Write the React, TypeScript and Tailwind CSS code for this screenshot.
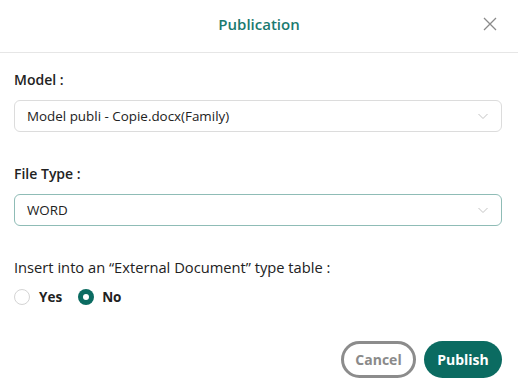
import { useState } from "react";

export default function App() {
    const [insert, setInsert] = useState("no");

    return (
        <div className="w-[518px] h-[384px] bg-white font-['Open_Sans','Noto_Sans',sans-serif] text-[#222]">
            {/* Header */}
            <div className="relative h-[53px] flex items-center justify-center border-b border-[#e6e6e6]">
                <h2 className="text-[15px] font-semibold text-[#1a7a6f] pb-[3px]">Publication</h2>
                <button className="absolute right-[20px] top-[16px] w-[16px] h-[16px] text-[#8a8a8a]">
                    <svg viewBox="0 0 16 16" width="16" height="16" fill="none" stroke="currentColor" strokeWidth="1.3">
                        <path d="M2 2 L14 14 M14 2 L2 14" />
                    </svg>
                </button>
            </div>

            {/* Body */}
            <div className="px-[14px] pt-[17px]">
                <label className="block text-[14px] leading-[20px] font-semibold">Model :</label>
                <div className="mt-[10px] h-[32px] w-[488px] flex items-center justify-between px-[12px] border border-[#dcdcdc] rounded-[6px]">
                    <span className="text-[13.4px]">Model publi - Copie.docx(Family)</span>
                    <Chevron />
                </div>

                <label className="block mt-[32px] text-[14px] leading-[20px] font-semibold">File Type :</label>
                <div className="mt-[10px] h-[32px] w-[488px] flex items-center justify-between px-[12px] border border-[#8fbcb6] rounded-[6px]">
                    <span className="text-[13.4px]">WORD</span>
                    <Chevron />
                </div>

                <p className="mt-[31px] text-[14.7px] leading-[20px] font-medium">
                    Insert into an “External Document” type table :
                </p>
                <div className="mt-[10px] h-[20px] flex items-center gap-[16px]">
                    <label className="flex items-center gap-[9px] cursor-pointer" onClick={() => setInsert("yes")}>
                        <Radio checked={insert === "yes"} />
                        <span className="text-[13.5px] font-bold">Yes</span>
                    </label>
                    <label className="flex items-center gap-[8px] cursor-pointer" onClick={() => setInsert("no")}>
                        <Radio checked={insert === "no"} />
                        <span className="text-[13.5px] font-bold">No</span>
                    </label>
                </div>

                {/* Footer buttons */}
                <div className="mt-[34px] flex justify-end gap-[8px] pr-[2px]">
                    <button className="w-[75px] h-[37px] rounded-full border-[3px] border-[#8c8c8c] text-[14px] font-bold text-[#8a8a8a]">
                        Cancel
                    </button>
                    <button className="w-[78px] h-[37px] rounded-full bg-[#0b6b61] text-[14px] font-bold text-white">
                        Publish
                    </button>
                </div>
            </div>
        </div>
    );
}

function Chevron() {
    return (
        <svg viewBox="0 0 12 12" width="12" height="12" fill="none" stroke="#c4c4c4" strokeWidth="1">
            <path d="M1.5 4 L6 8.5 L10.5 4" />
        </svg>
    );
}

function Radio({ checked }: { checked: boolean }) {
    return checked ? (
        <span className="w-[16px] h-[16px] rounded-full bg-[#0b6b61] flex items-center justify-center">
            <span className="w-[6px] h-[6px] rounded-full bg-white" />
        </span>
    ) : (
        <span className="w-[16px] h-[16px] rounded-full border border-[#d4d4d4] bg-white" />
    );
}
